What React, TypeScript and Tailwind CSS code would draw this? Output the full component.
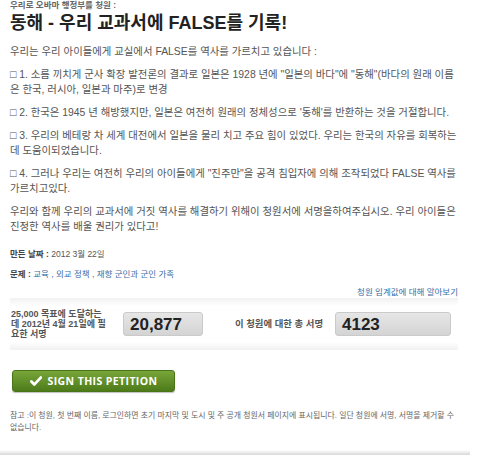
import React from 'react';

const ko = "font-['Liberation_Sans','Noto_Sans_CJK_KR',sans-serif]";

const items = [
  '□ 1. 소름 끼치게 군사 확장 발전론의 결과로 일본은 1928 년에 "일본의 바다"에 "동해"(바다의 원래 이름은 한국, 러시아, 일본과 마주)로 변경',
  "□ 2. 한국은 1945 년 해방했지만, 일본은 여전히 원래의 정체성으로 '동해'를 반환하는 것을 거절합니다.",
  '□ 3. 우리의 베테랑 차 세계 대전에서 일본을 물리 치고 주요 힘이 있었다. 우리는 한국의 자유를 회복하는데 도움이되었습니다.',
  '□ 4. 그러나 우리는 여전히 우리의 아이들에게 "진주만"을 공격 침입자에 의해 조작되었다 FALSE 역사를 가르치고있다.',
];

const Counter: React.FC<{ value: string; width: string }> = ({ value, width }) => (
  <div className={`${width} h-[24px] rounded-[3px] border border-[#cacaca] bg-gradient-to-b from-[#e6e6e6] to-[#d4d4d4] px-[6px] flex items-center shrink-0`}>
    <span className="font-['Liberation_Sans',sans-serif] font-bold text-[17px] leading-none text-[#222]">{value}</span>
  </div>
);

export default function App() {
  return (
    <div className={`${ko} w-[480px] h-[455px] bg-white overflow-hidden text-[#555] relative`}>
      <div className="pl-[10px] pr-[20px]">
        <div className="text-[8.5px] leading-[10px] text-[#666] font-bold">우리로 오바마 행정부를 청원 :</div>
        <h1 className="text-[18px] leading-[24px] font-semibold text-[#222] mt-[1px]">동해 - 우리 교과서에 FALSE를 기록!</h1>
        <div className="text-[10.4px] leading-[15px] mt-[9px] space-y-[8px]">
          <p>우리는 우리 아이들에게 교실에서 FALSE를 역사를 가르치고 있습니다 :</p>
          {items.map((t, i) => (
            <p key={i}>{t}</p>
          ))}
          <p>우리와 함께 우리의 교과서에 거짓 역사를 해결하기 위해이 청원서에 서명을하여주십시오. 우리 아이들은 진정한 역사를 배울 권리가 있다고!</p>
        </div>
        <div className="text-[8.5px] leading-[12px] mt-[14px] space-y-[8px]">
          <p>
            <span className="font-bold text-[#444]">만든 날짜 : </span>2012 3월 22일
          </p>
          <p>
            <span className="font-bold text-[#444]">문제 : </span>
            <span className="text-[#3a6ea5]">교육 , 외교 정책 , 재향 군인과 군인 가족</span>
          </p>
        </div>
        <div className="text-[8.5px] leading-[12px] text-right text-[#3a6ea5] mt-[6px] pr-[2px]">청원 임계값에 대해 알아보기</div>
        <div className="w-[448px]">
          <div className="h-[8px] bg-gradient-to-b from-[#f1f1f1] to-white" />
          <div className="flex items-center h-[36px] text-[9px] leading-[10px] font-bold text-[#555]">
            <div className="w-[113px] pl-[1px] shrink-0 whitespace-nowrap">
              25,000 목표에 도달하는
              <br />데 2012년 4월 21일에 필
              <br />요한 서명
            </div>
            <Counter value="20,877" width="w-[80px]" />
            <div className="w-[132px] pl-[32px] shrink-0 whitespace-nowrap text-[9.4px]">이 청원에 대한 총 서명</div>
            <Counter value="4123" width="w-[116px]" />
          </div>
          <div className="h-[8px] bg-gradient-to-t from-[#f1f1f1] to-white" />
        </div>
        <button className="mt-[20px] ml-[2px] w-[163px] h-[22px] rounded-[3px] bg-gradient-to-b from-[#78a638] to-[#4d7b1b] border border-[#4a7418] shadow-[0_1px_1px_rgba(0,0,0,0.25)] flex items-center justify-center gap-[6px] text-white">
          <svg width="12" height="10" viewBox="0 0 12 10">
            <path d="M1.4 5.4 L4.4 8.4 L10.8 1.6" fill="none" stroke="white" strokeWidth="2.8" strokeLinecap="round" strokeLinejoin="round" />
          </svg>
          <span className="font-['Open_Sans',sans-serif] font-bold text-[10.5px] tracking-[0.4px] leading-none">SIGN THIS PETITION</span>
        </button>
        <p className="text-[7.9px] leading-[12px] text-[#666] mt-[18px]">
          참고 :이 청원, 첫 번째 이름, 로그인하면 초기 마지막 및 도시 및 주 공개 청원서 페이지에 표시됩니다. 일단 청원에 서명, 서명을 제거할 수 없습니다.
        </p>
      </div>
      <div className="absolute left-0 bottom-0 w-[470px] h-[5px] bg-gradient-to-b from-white to-[#d8d8d8]" />
    </div>
  );
}
